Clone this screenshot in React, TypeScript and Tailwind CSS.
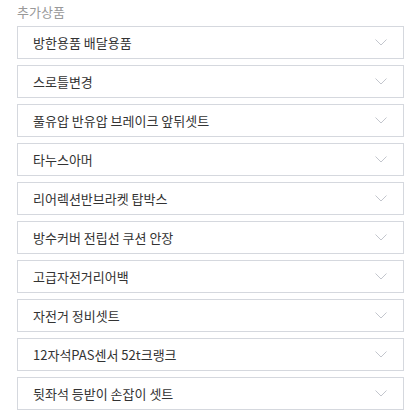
const items = [
  '방한용품 배달용품',
  '스로틀변경',
  '풀유압 반유압 브레이크 앞뒤셋트',
  '타누스아머',
  '리어렉션반브라켓 탑박스',
  '방수커버 전립선 쿠션 안장',
  '고급자전거리어백',
  '자전거 정비셋트',
  '12자석PAS센서 52t크랭크',
  '뒷좌석 등받이 손잡이 셋트',
]

function Chevron() {
  return (
    <svg width="12" height="7" viewBox="0 0 12 7" fill="none">
      <path d="M0.5 0.5 L6 6 L11.5 0.5" stroke="#c3c6cd" strokeWidth="1" />
    </svg>
  )
}

function OptionRow({ label }: { label: string }) {
  return (
    <div className="flex h-[33px] items-center justify-between border border-[#d5d8de] bg-white pl-[15px] pr-[16px]">
      <span className="text-[13px] text-[#333]">{label}</span>
      <Chevron />
    </div>
  )
}

export default function App() {
  return (
    <div
      className="w-[414px] h-[415px] bg-white pl-[17px] pr-[10px] pt-[2px]"
      style={{ fontFamily: '"Malgun Gothic", "Noto Sans CJK KR", sans-serif' }}
    >
      <div className="h-[24px] leading-[20px] text-[13px] text-[#999]">추가상품</div>
      <div className="flex flex-col gap-[6px]">
        {items.map((it) => (
          <OptionRow key={it} label={it} />
        ))}
      </div>
    </div>
  )
}
